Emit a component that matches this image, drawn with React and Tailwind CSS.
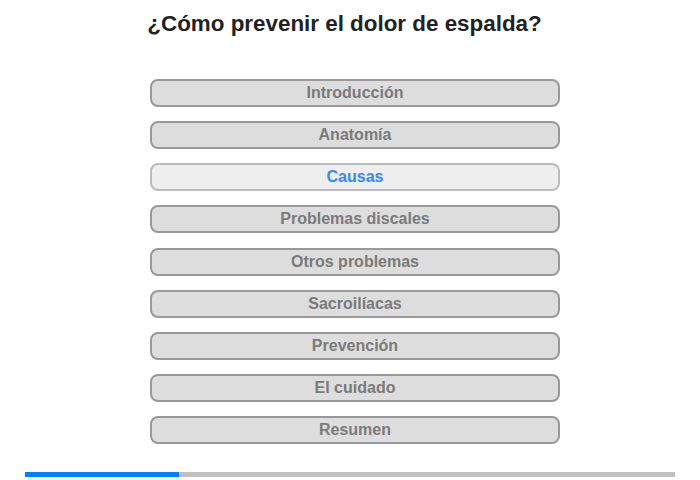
const items = [
  "Introducción",
  "Anatomía",
  "Causas",
  "Problemas discales",
  "Otros problemas",
  "Sacroilíacas",
  "Prevención",
  "El cuidado",
  "Resumen",
];

const active = "Causas";

export default function App() {
  return (
    <div
      className="relative w-[700px] h-[480px] bg-white overflow-hidden"
      style={{ fontFamily: '"Liberation Sans", Arial, sans-serif' }}
    >
      <h1 className="pt-[11px] pr-[11px] text-center text-[22.4px] leading-[26px] font-bold text-[#222]">
        ¿Cómo prevenir el dolor de espalda?
      </h1>

      <div className="mt-[42px] flex flex-col items-center gap-[14.125px] pl-[10px]">
        {items.map((label) => {
          const on = label === active;
          return (
            <div
              key={label}
              className={`w-[410px] h-[28px] rounded-[8px] border-2 flex items-center justify-center text-[16px] font-bold ${
                on
                  ? "bg-[#eeeeee] border-[#bbbbbb] text-[#3388ff]"
                  : "bg-[#dddddd] border-[#999999] text-[#7a7a7a]"
              }`}
            >
              {label}
            </div>
          );
        })}
      </div>

      <div className="absolute left-[25px] top-[472px] w-[650px] h-[5px] bg-[#c0c0c0] flex">
        <div className="w-[154px] h-full bg-[#0080ff]" />
      </div>
    </div>
  );
}
